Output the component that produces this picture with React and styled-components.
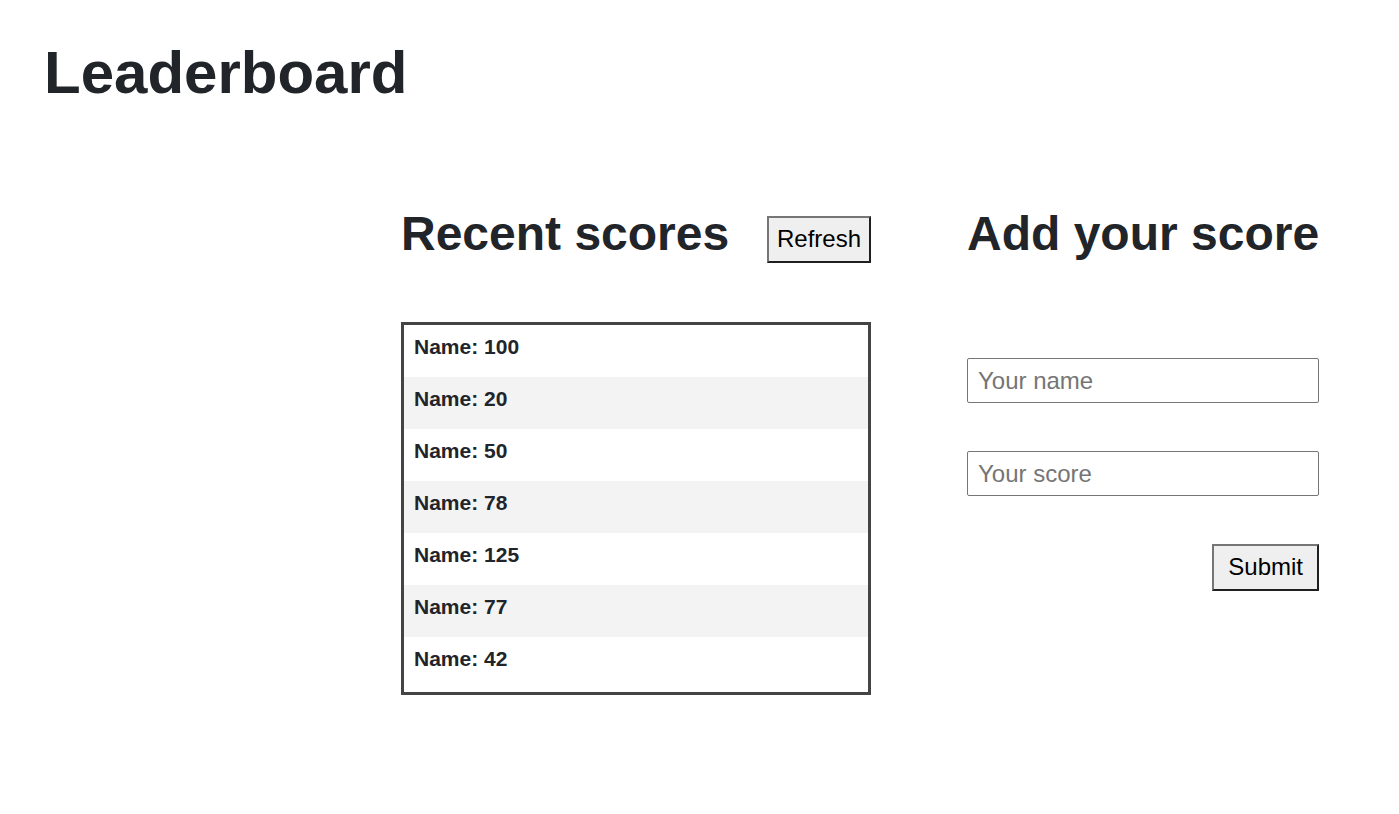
import styled, { createGlobalStyle } from "styled-components";

const GlobalStyle = createGlobalStyle`
    body {
        margin: 0;
        background: #fff;
        font-family: "Liberation Sans", Arial, sans-serif;
        color: #212529;
    }
`;

const Page = styled.div`
    padding: 38px 80px 40px 40px;
`;

const Title = styled.h1`
    margin: 0 0 0 4px;
    font-size: 60px;
    font-weight: 700;
    line-height: normal;
`;

const Columns = styled.div`
    display: flex;
    justify-content: flex-end;
    align-items: flex-start;
    gap: 96px;
    margin-top: 99px;
`;

const ScoresSection = styled.section`
    width: 470px;
    display: flex;
    flex-direction: column;
`;

const FormSection = styled.section`
    width: 352px;
    display: flex;
    flex-direction: column;
`;

const SectionHeader = styled.div`
    display: flex;
    justify-content: space-between;
    align-items: flex-start;
`;

const SectionTitle = styled.h2`
    margin: 0;
    font-size: 48px;
    font-weight: 700;
    line-height: 55px;
    white-space: nowrap;
`;

const Button = styled.button`
    font-family: "Liberation Sans", Arial, sans-serif;
    font-size: 24px;
    line-height: 28px;
    color: #000;
    background: #efefef;
    border-style: solid;
    border-width: 2px;
    border-color: #767676 #1f1f1f #1f1f1f #767676;
    padding: ${p => p.$wide ? "7px 14px 8px" : "7px 8px 8px"};
    margin-top: ${p => p.$offset || 0}px;
    align-self: ${p => p.$right ? "flex-end" : "auto"};
    cursor: pointer;
`;

const ScoreList = styled.ul`
    list-style: none;
    margin: 59px 0 0;
    padding: 0 0 3px;
    border: 3px solid #444;
`;

const ScoreRow = styled.li`
    box-sizing: border-box;
    height: 52px;
    padding: 10px 10px;
    font-size: 21px;
    font-weight: 700;
    line-height: 24px;
    background: ${p => p.$shaded ? "#f3f3f3" : "#fff"};
`;

const Input = styled.input`
    box-sizing: border-box;
    width: 100%;
    height: 45px;
    margin-top: ${p => p.$gap}px;
    padding: 8px 10px;
    font-family: "Liberation Sans", Arial, sans-serif;
    font-size: 24px;
    color: #212529;
    border: 1px solid #767676;
    border-radius: 2px;
    &::placeholder {
        color: #757575;
    }
`;

const scores = [100, 20, 50, 78, 125, 77, 42];

const App = () => {
    return <>
        <GlobalStyle />
        <Page>
            <Title>Leaderboard</Title>
            <Columns>
                <ScoresSection>
                    <SectionHeader>
                        <SectionTitle>Recent scores</SectionTitle>
                        <Button $offset={10}>Refresh</Button>
                    </SectionHeader>
                    <ScoreList>
                        {scores.map((score, i) => (
                            <ScoreRow key={i} $shaded={i % 2 === 1}>Name: {score}</ScoreRow>
                        ))}
                    </ScoreList>
                </ScoresSection>
                <FormSection>
                    <SectionTitle>Add your score</SectionTitle>
                    <Input $gap={97} placeholder="Your name" />
                    <Input $gap={48} placeholder="Your score" />
                    <Button $wide $right $offset={48}>Submit</Button>
                </FormSection>
            </Columns>
        </Page>
    </>
}

export default App;
